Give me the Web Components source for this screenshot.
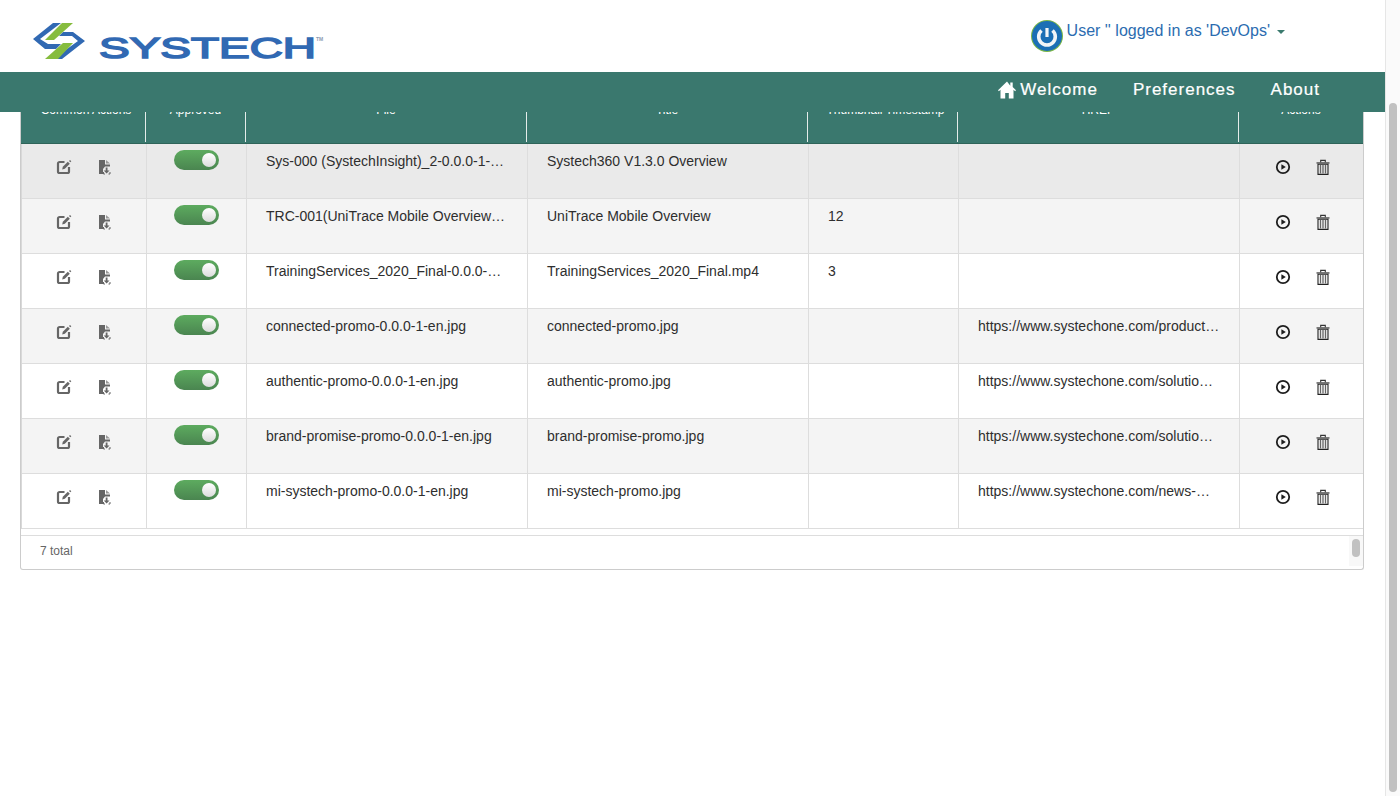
<!DOCTYPE html>
<html>
<head>
<meta charset="utf-8">
<title>Systech</title>
<style>
  html, body { margin: 0; height: 100%; overflow: hidden; background: #fff; font-family: "Liberation Sans", Arial, sans-serif; }
  body { display: flex; }
  #page { flex: 1; min-width: 0; height: 796px; display: flex; flex-direction: column; overflow: hidden; }
  #content { flex: 1; min-height: 0; overflow: hidden; padding: 0 21px 0 20px; }
</style>
</head>
<body>
<div id="page">
  <app-header></app-header>
  <app-nav></app-nav>
  <div id="content">
    <file-table total="7 total">
      <file-row file="Sys-000 (SystechInsight)_2-0.0.0-1-en.mp4" name="Systech360 V1.3.0 Overview" tone="sel"></file-row>
      <file-row file="TRC-001(UniTrace Mobile Overview-0.0.0-1-en.mp4" name="UniTrace Mobile Overview" thumb="12" tone="alt"></file-row>
      <file-row file="TrainingServices_2020_Final-0.0.0-1-en.mp4" name="TrainingServices_2020_Final.mp4" thumb="3"></file-row>
      <file-row file="connected-promo-0.0.0-1-en.jpg" name="connected-promo.jpg" href="https://www.systechone.com/products/connected/" tone="alt"></file-row>
      <file-row file="authentic-promo-0.0.0-1-en.jpg" name="authentic-promo.jpg" href="https://www.systechone.com/solutions/authentic/"></file-row>
      <file-row file="brand-promise-promo-0.0.0-1-en.jpg" name="brand-promise-promo.jpg" href="https://www.systechone.com/solutions/brand-promise/" tone="alt"></file-row>
      <file-row file="mi-systech-promo-0.0.0-1-en.jpg" name="mi-systech-promo.jpg" href="https://www.systechone.com/news-media/mi-systech/"></file-row>
    </file-table>
  </div>
</div>
<page-scrollbar></page-scrollbar>

<script>
// Top white bar: logo on the left, user menu on the right
class AppHeader extends HTMLElement {
  constructor() {
    super();
    this.attachShadow({ mode: 'open' });
    this.shadowRoot.innerHTML = `
      <style>
        :host { display: flex; height: 72px; justify-content: space-between; background: #fff; }
        .logo { display: block; margin-left: 32px; margin-top: 22px; width: 296px; height: 40px; }
        .user { display: flex; align-items: flex-start; margin-right: 100px; padding-top: 20px; color: #2b6cb0; font-size: 16px; }
        .power { width: 32px; height: 32px; margin-right: 4px; }
        .label { line-height: 21px; }
        .caret { width: 0; height: 0; margin: 10px 0 0 7px; border-left: 4px solid transparent; border-right: 4px solid transparent; border-top: 4px solid #3b7a6e; }
      </style>
      <svg class="logo" viewBox="32 22 296 40">
        <polygon fill="#3169b3" points="53,23 61,23 40,39 48,44 61,44 56,49 45,49 33,39"/>
        <polygon fill="#3169b3" points="63,32 73,32 85,41 62,59 53,59 78,41 72,36 59,36"/>
        <polygon fill="#86bc3e" points="62,23 73,23 54,40 45,40"/>
        <polygon fill="#86bc3e" points="63,43 73,43 58,59 45,59"/>
        <text x="99" y="58.300" font-family="Liberation Sans, Arial, sans-serif" font-size="29" fill="#3169b3" stroke="#3169b3" stroke-width="1.500" stroke-linejoin="miter" textLength="217" lengthAdjust="spacingAndGlyphs">SYSTECH</text>
        <text x="316" y="41" font-family="Liberation Sans, Arial, sans-serif" font-weight="700" font-size="5" fill="#8a9bb0">TM</text>
      </svg>
      <div class="user">
        <svg class="power" viewBox="0 0 32 32">
          <circle cx="16" cy="16" r="16" fill="#7ab648"/>
          <circle cx="16" cy="16" r="15" fill="#1b6fb5"/>
          <path d="M10.500 10.500a8.300 8.300 0 1 0 11 0" fill="none" stroke="#f2f5f7" stroke-width="3.600"/>
          <path d="M16 8v9" stroke="#f2f5f7" stroke-width="3.200" fill="none"/>
        </svg>
        <span class="label">User '' logged in as 'DevOps'</span>
        <span class="caret"></span>
      </div>
    `;
  }
}
customElements.define('app-header', AppHeader);

class AppNav extends HTMLElement {
  constructor() {
    super();
    this.attachShadow({ mode: 'open' });
    this.shadowRoot.innerHTML = `
      <style>
        :host { display: flex; position: relative; z-index: 2; height: 40px; flex: none; justify-content: flex-end; align-items: center; gap: 35px; padding: 0 65px 4px 0; box-sizing: border-box; background: #3a786e; color: #fff; font-size: 17px; letter-spacing: 1px; -webkit-text-stroke: 0.2px #fff; }
        a { display: flex; align-items: center; }
        svg { width: 18px; height: 18px; margin-right: 4px; margin-top: -1px; }
      </style>
      <a><svg viewBox="0 0 18 18"><path fill="#fff" d="M9 0.500 0 9.200l0.900 1 1.600-1.400V17.500h4.700v-5.600h3.600v5.600h4.700V8.800l1.600 1.400 0.900-1-3.300-3.100V1.400h-2.400v3.400z"/></svg>Welcome</a>
      <a>Preferences</a>
      <a>About</a>
    `;
  }
}
customElements.define('app-nav', AppNav);

// Card with the clipped teal head row, the slotted rows and the footer
class FileTable extends HTMLElement {
  constructor() {
    super();
    this.attachShadow({ mode: 'open' });
    const heads = ['Common Actions', 'Approved', 'File', 'Title', 'Thumbnail Timestamp', 'HREF', 'Actions'];
    this.shadowRoot.innerHTML = `
      <style>
        :host { display: block; margin-top: -18px; border: 1px solid #ccc; border-top: 0; border-radius: 0 0 3px 3px; background: #fff; }
        .head { display: grid; grid-template-columns: 125px 100px 281px 281px 150px 281px 1fr; height: 50px; background: #3a786e; border-bottom: 1px solid #2f6459; box-sizing: border-box; color: #fff; font-size: 12px; }
        .head div { border-right: 1px solid #e4ecea; margin: 18px 0 1px; text-align: center; }
        .head div:last-child { border-right: 0; }
        .head div.off { padding-left: 6px; }
        .head span { display: block; margin-top: -9px; line-height: 14px; }
        .rows { border-left: 1px solid #d9d9d9; }
        .gap { height: 6px; border-bottom: 1px solid #ddd; }
        .foot { display: flex; height: 33px; justify-content: space-between; }
        .total { padding: 8px 0 0 19px; font-size: 12px; line-height: 14px; color: #666; }
        .track { width: 14px; height: 30px; background: #f8f8f8; display: flex; justify-content: center; padding-top: 3px; box-sizing: border-box; }
        .track i { display: block; width: 8px; height: 18px; border-radius: 4px; background: #c1c1c1; }
      </style>
      <div class="head">${heads.map((h, i) => `<div class="${i === 0 || i === 4 ? 'off' : ''}"><span>${h}</span></div>`).join('')}</div>
      <div class="rows"><slot></slot></div>
      <div class="gap"></div>
      <div class="foot"><div class="total"></div><div class="track"><i></i></div></div>
    `;
    this.shadowRoot.querySelector('.total').textContent = this.getAttribute('total');
  }
}
customElements.define('file-table', FileTable);

class ToggleSwitch extends HTMLElement {
  constructor() {
    super();
    this.attachShadow({ mode: 'open' });
    this.shadowRoot.innerHTML = `
      <style>
        :host { display: flex; width: 45px; height: 20px; box-sizing: border-box; justify-content: flex-end; align-items: center; padding-right: 3px; border-radius: 10px; background: linear-gradient(#5dab5f, #4a8550); }
        i { display: block; width: 14px; height: 14px; border-radius: 50%; background: linear-gradient(#fff, #dcdcdc); }
      </style>
      <i></i>
    `;
  }
}
customElements.define('toggle-switch', ToggleSwitch);

const ICONS = {
  edit: `<svg width="16" height="16" viewBox="0 0 16 16"><path d="M8.500 3H3.600A1.600 1.600 0 0 0 2 4.600v7.800A1.600 1.600 0 0 0 3.600 14h7.800A1.600 1.600 0 0 0 13 12.400V8" fill="none" stroke="#666" stroke-width="2.200"/><path d="M6.200 10.400 6.800 7.800l5-5 2 2-5 5z" fill="#666"/><path d="M13 2l1-1 1.300 1.300-1 1z" fill="#666"/></svg>`,
  doc: `<svg width="16" height="16" viewBox="0 0 16 16"><path d="M3 1H9V5.500H14V7.500H9L7 10V15H3z" fill="#666"/><path d="M10 1 14 4.500H10z" fill="#999"/><path d="M9.700 8.500h1.800v3h2l-2.900 2.900-2.900-2.900h2z" fill="#666"/><path d="M7.500 13V15H9M12.500 15H14V13" fill="none" stroke="#666" stroke-width="1"/></svg>`,
  play: `<svg width="16" height="16" viewBox="0 0 16 16"><circle cx="8" cy="8" r="6.200" fill="none" stroke="#1e1e1e" stroke-width="1.800"/><path d="M6.400 5.200 10.800 8l-4.400 2.800z" fill="#1e1e1e"/></svg>`,
  trash: `<svg width="16" height="16" viewBox="0 0 16 16"><path d="M1.500 3.300h13v1.300h-13z" fill="#444"/><path d="M5.700 3.300V1.400h4.600v1.900" fill="none" stroke="#333" stroke-width="1.100"/><path d="M3 5.200h10V15.400H3z" fill="none" stroke="#222" stroke-width="1.100"/><path d="M5.500 6v8.500M8 6v8.500M10.500 6v8.500" stroke="#666" stroke-width="1.300"/></svg>`
};

// One table row, text comes in through attributes
class FileRow extends HTMLElement {
  constructor() {
    super();
    this.attachShadow({ mode: 'open' });
    const cell = name => this.getAttribute(name) || '';
    this.shadowRoot.innerHTML = `
      <style>
        :host { display: grid; grid-template-columns: 125px 100px 281px 281px 150px 281px 1fr; height: 55px; box-sizing: border-box; border-bottom: 1px solid #ddd; background: #fff; color: #2e2e2e; font-size: 14px; }
        :host([tone="alt"]) { background: #f4f4f4; }
        :host([tone="sel"]) { background: #eaeaea; }
        .c { border-right: 1px solid #ddd; box-sizing: border-box; min-width: 0; }
        .c:last-child { border-right: 0; padding-left: 2px; }
        .text { padding: 9px 19px 0 19px; line-height: 16px; white-space: nowrap; overflow: hidden; text-overflow: ellipsis; }
        .icons { display: flex; gap: 24px; justify-content: center; padding-top: 15px; }
        .sw { display: flex; justify-content: center; padding-top: 6px; }
      </style>
      <div class="c icons">${ICONS.edit}${ICONS.doc}</div>
      <div class="c sw"><toggle-switch></toggle-switch></div>
      <div class="c text"></div>
      <div class="c text"></div>
      <div class="c text"></div>
      <div class="c text"></div>
      <div class="c icons">${ICONS.play}${ICONS.trash}</div>
    `;
    const texts = this.shadowRoot.querySelectorAll('.text');
    ['file', 'name', 'thumb', 'href'].forEach((k, i) => { texts[i].textContent = cell(k); });
  }
}
customElements.define('file-row', FileRow);

class PageScrollbar extends HTMLElement {
  constructor() {
    super();
    this.attachShadow({ mode: 'open' });
    this.shadowRoot.innerHTML = `
      <style>
        :host { display: block; flex: none; width: 15px; height: 796px; box-sizing: border-box; border-left: 1px solid #e6e6e6; background: #fafafa; padding: 103px 3px 0 3px; }
        i { display: block; width: 8px; height: 689px; border-radius: 4px; background: #c1c1c1; }
      </style>
      <i></i>
    `;
  }
}
customElements.define('page-scrollbar', PageScrollbar);
</script>
</body>
</html>
